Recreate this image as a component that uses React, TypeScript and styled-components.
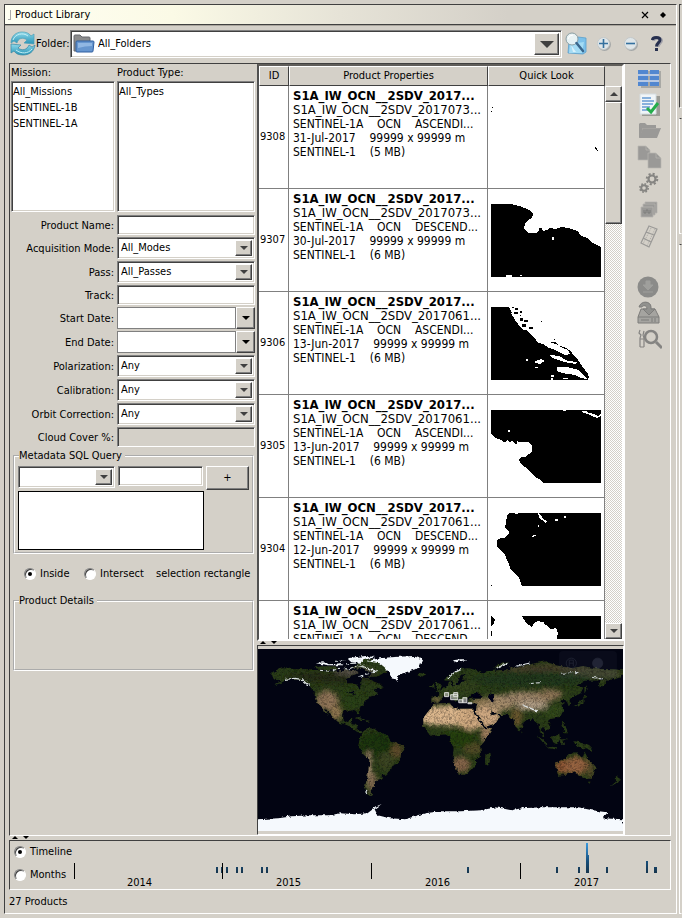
import React from "react";
import styled, { createGlobalStyle, css } from "styled-components";

const face = "#d4d0c8";
const dark = "#404040";
const mid = "#808080";

const Global = createGlobalStyle`
  * { box-sizing: border-box; }
  body { margin: 0; background: ${face}; }
  body, button, input, select, textarea {
    font-family: "DejaVu Sans Condensed", "Noto Sans", sans-serif;
    font-size: 11px;
    line-height: 14px;
    color: #000;
  }
`;

const sunken = css`
  border: 1px solid;
  border-color: ${mid} #fff #fff ${mid};
  box-shadow: inset 1px 1px 0 ${dark}, inset -1px -1px 0 ${face};
`;
const raised = css`
  border: 1px solid;
  border-color: #fff ${dark} ${dark} #fff;
  box-shadow: inset -1px -1px 0 ${mid};
  background: ${face};
`;
const etched = css`
  border: 1px solid;
  border-color: ${dark} #fff #fff ${dark};
`;

/* ---------- frame ---------- */
const Screen = styled.div`
  display: grid;
  grid-template-columns: minmax(0, 1fr) 3px;
  column-gap: 2px;
  height: 100vh;
  min-height: 760px;
  padding: 4px 0 4px 4px;
`;
const Frame = styled.main`
  display: flex;
  flex-direction: column;
  min-height: 0;
  border: 1px solid;
  border-color: ${dark} #fff #fff ${dark};
`;
const Neighbours = styled.aside`
  display: grid;
  grid-template-rows: 104px 116px 1fr;
  row-gap: 10px;
`;
const Neighbour = styled.div<{ $flat?: boolean }>`
  border: 1px solid;
  border-color: ${dark} transparent #fff ${(p) => (p.$flat ? "#fff" : dark)};
`;
const TitleBar = styled.header`
  display: flex;
  align-items: center;
  gap: 4px;
  height: 20px;
  padding: 0 6px 0 3px;
  border-bottom: 1px solid ${dark};
  background: linear-gradient(90deg, #fffff2, #fbfae6 25%, #e6e3d7 50%, ${face} 75%);
  box-shadow: 0 1px 0 #aaa69e;
`;
const Grip = styled.span`
  width: 3px;
  height: 10px;
  border: 1px solid #aaa;
  border-width: 0 1px 1px 0;
`;
const Title = styled.h1`
  flex: 1;
  margin: 0;
  font-size: 11px;
  font-weight: normal;
`;
const BareButton = styled.button`
  display: flex;
  align-items: center;
  justify-content: center;
  padding: 0;
  border: 0;
  background: none;
  svg { display: block; }
`;
const TitleButton = styled(BareButton)`
  width: 14px;
  height: 14px;
`;

/* ---------- toolbar ---------- */
const Toolbar = styled.div`
  display: flex;
  align-items: center;
  height: 38px;
  padding: 0 6px 0 5px;
`;
const FolderLabel = styled.label`
  width: 34px;
  white-space: nowrap;
`;
const ToolButton = styled(BareButton)<{ $w: number }>`
  width: ${(p) => p.$w}px;
  height: 28px;
`;

/* ---------- fields ---------- */
const ComboBox = styled.span<{ $h: number; $arrow: number }>`
  display: grid;
  grid-template-columns: minmax(0, 1fr) ${(p) => p.$arrow}px;
  height: ${(p) => p.$h}px;
  padding: 2px;
  background: #fff;
  ${sunken}
`;
const FolderCombo = styled(ComboBox)`
  flex: 1;
  grid-template-columns: 24px minmax(0, 1fr) ${(p) => p.$arrow}px;
  align-items: center;
`;
const Select = styled.select<{ $from?: number }>`
  grid-row: 1;
  grid-column: ${(p) => p.$from ?? 1} / -1;
  appearance: none;
  width: 100%;
  height: 100%;
  padding: 0 20px 0 1px;
  border: 0;
  outline: 0;
  background: transparent;
`;
const Arrow = styled.span`
  grid-row: 1;
  grid-column: -2 / -1;
  align-self: stretch;
  display: flex;
  align-items: center;
  justify-content: center;
  pointer-events: none;
  ${raised}
`;
const Input = styled.input`
  width: 100%;
  height: 20px;
  padding: 0 3px;
  background: #fff;
  outline: 0;
  ${sunken}
  &:disabled { background: ${face}; }
`;
const DateBox = styled.span`
  display: grid;
  grid-template-columns: minmax(0, 1fr) 19px;
  height: 22px;
`;
const DateInput = styled.input`
  width: 100%;
  height: 100%;
  border: 1px solid ${mid};
  padding: 0 3px;
`;
const DateButton = styled.button`
  display: flex;
  align-items: center;
  justify-content: center;
  padding: 0;
  ${raised}
`;

/* ---------- work area ---------- */
const Body = styled.div`
  flex: 1;
  min-height: 0;
  display: flex;
  flex-direction: column;
  padding: 0 5px 0 4px;
`;
const Work = styled.div`
  flex: 1;
  min-height: 0;
  display: grid;
  grid-template-columns: 247px minmax(0, 1fr) 46px;
  ${etched}
`;
const FormPane = styled.form`
  padding: 0 2px 0 1px;
  min-height: 0;
  overflow: hidden;
`;
const FormGrid = styled.div`
  display: grid;
  grid-template-columns: 104px minmax(0, 1fr);
  column-gap: 2px;
  row-gap: 2px;
  align-items: center;
`;
const ListGrid = styled(FormGrid)`
  row-gap: 0;
  margin-bottom: 3px;
`;
const ListLabel = styled.label`
  height: 17px;
  padding-top: 2px;
`;
const List = styled.ul`
  height: 131px;
  margin: 0;
  padding: 2px 1px;
  list-style: none;
  background: #fff;
  line-height: 16px;
  ${sunken}
`;
const FieldLabel = styled.label`
  text-align: right;
  white-space: nowrap;
  padding: 2px 1px 0 0;
`;
const Group = styled.fieldset<{ $h: number }>`
  height: ${(p) => p.$h}px;
  margin: 2px 1px 0 2px;
  padding: 3px 3px 0;
  border: 2px groove #fff;
`;
const Legend = styled.legend`
  margin-left: 1px;
  padding: 0 3px 0 0;
`;
const QueryRow = styled.div`
  display: grid;
  grid-template-columns: 97px minmax(0, 1fr) 43px;
  column-gap: 3px;
  height: 25px;
  align-items: start;
`;
const AddButton = styled.button`
  height: 24px;
  padding: 0;
  ${raised}
`;
const QueryText = styled.textarea`
  display: block;
  width: calc(100% - 45px);
  height: 59px;
  border: 1px solid #000;
  background: #fff;
  resize: none;
`;
const RadioRow = styled.div`
  display: flex;
  align-items: center;
  height: 38px;
  padding: 2px 0 0 13px;
  white-space: nowrap;
`;
const RadioLabel = styled.label<{ $w?: number }>`
  display: flex;
  align-items: center;
  gap: 4px;
  width: ${(p) => (p.$w ? p.$w + "px" : "auto")};
`;
const Radio = styled.input`
  appearance: none;
  display: grid;
  place-items: center;
  width: 12px;
  height: 12px;
  margin: 0;
  border: 1px solid;
  border-color: ${mid} #fff #fff ${mid};
  border-radius: 50%;
  background: #fff;
  box-shadow: inset 1px 1px 0 ${dark};
  &:checked::after {
    content: "";
    width: 4px;
    height: 4px;
    border-radius: 50%;
    background: #000;
  }
`;

/* ---------- results ---------- */
const Centre = styled.section`
  display: flex;
  flex-direction: column;
  min-height: 0;
`;
const Results = styled.div`
  flex: 1;
  min-height: 0;
  display: grid;
  grid-template-columns: minmax(0, 1fr) 17px;
  background: #fff;
  border: 2px solid;
  border-color: #605e5a #fff #fff #505050;
`;
const TableClip = styled.div`
  min-height: 0;
  overflow: hidden;
`;
const Table = styled.table`
  width: 100%;
  table-layout: fixed;
  border-collapse: separate;
  border-spacing: 0;
`;
const Th = styled.th<{ $w?: number }>`
  width: ${(p) => (p.$w ? p.$w + "px" : "auto")};
  height: 20px;
  padding: 0;
  font-weight: normal;
  background: ${face};
  border: 1px solid;
  border-color: #fff ${dark} ${dark} #fff;
`;
const Td = styled.td`
  height: 103px;
  padding: 0;
  border: 1px solid ${mid};
  border-width: 0 1px 1px 0;
  vertical-align: middle;
`;
const IdCell = styled(Td)`
  padding-left: 1px;
`;
const PropCell = styled(Td)`
  padding: 3px 0 0 4px;
  vertical-align: top;
  overflow: hidden;
`;
const LookCell = styled(Td)`
  padding: 0 3px;
  svg { display: block; width: 100%; max-width: 110px; height: 73px; }
`;
const Line = styled.div<{ $kind?: "title" | "name" }>`
  white-space: pre;
  font-size: ${(p) => (p.$kind ? 13 : 12)}px;
  font-weight: ${(p) => (p.$kind === "title" ? "bold" : "normal")};
  line-height: 14px;
`;
const ScrollBar = styled.div`
  display: flex;
  flex-direction: column;
  background: repeating-conic-gradient(${face} 0 25%, #fff 0 50%) 0 0 / 2px 2px;
`;
const ScrollTop = styled.div`
  height: 20px;
  background: ${face};
`;
const ScrollButton = styled.button`
  display: flex;
  align-items: center;
  justify-content: center;
  height: 16px;
  padding: 0;
  ${raised}
`;
const Thumb = styled.div`
  height: 122px;
  ${raised}
`;
const Track = styled.div`
  flex: 1;
`;
const Splitter = styled.div`
  display: flex;
  gap: 5px;
  height: 4px;
  padding-left: 3px;
  svg { display: block; }
`;
const MapFrame = styled.div`
  padding: 3px 0;
  border: 1px solid;
  border-color: ${dark} #fff #fff ${dark};
  svg { display: block; width: 100%; height: auto; }
`;
const SideBar = styled.nav`
  display: flex;
  flex-direction: column;
  align-items: center;
  padding: 2px 0 0 2px;
  border-left: 1px solid #fff;
`;
const SideButton = styled(BareButton)<{ $gap?: number }>`
  width: 26px;
  height: 26px;
  margin-top: ${(p) => p.$gap ?? 0}px;
`;

/* ---------- timeline ---------- */
const Timeline = styled.section`
  display: grid;
  grid-template-columns: 64px minmax(0, 1fr);
  height: 50px;
  ${etched}
`;
const Modes = styled.div`
  display: grid;
  grid-template-rows: 22px 24px;
  padding-left: 4px;
`;
const Chart = styled.div`
  display: flex;
  flex-direction: column;
  svg { display: block; width: 100%; height: 38px; }
`;
const Years = styled.div`
  display: grid;
  grid-template-columns: repeat(4, 1fr);
  height: 10px;
  line-height: 8px;
  span { text-align: center; padding-right: 18px; }
`;
const Status = styled.footer`
  height: 23px;
  padding-top: 5px;
`;

/* ---------- small drawings ---------- */
const Tri = ({ w = 8, up = false, color = "#404040" }: { w?: number; up?: boolean; color?: string }) => (
  <svg width={w} height={w / 2} viewBox="0 0 8 4" aria-hidden>
    <path d={up ? "M0 4L4 0L8 4Z" : "M0 0H8L4 4Z"} fill={color} />
  </svg>
);

const RefreshIcon = () => (
  <svg width="26" height="26" viewBox="0 0 26 26">
    <defs>
      <linearGradient id="rf" x1="0" y1="0" x2="0" y2="1">
        <stop offset="0" stopColor="#8fdaea" />
        <stop offset="1" stopColor="#2793b6" />
      </linearGradient>
    </defs>
    <path d="M1 12C1 5 6 1 12 1C16 1 19 2 21 5L24 3V13L14 12L17 9C13 6 8 7 7 12L4 10Z" fill="url(#rf)" stroke="#4a9fb8" strokeWidth=".7" />
    <path d="M25 14C24 21 19 24 13 24C9 24 6 23 4 20L1 22V13L11 14L8 17C12 20 17 19 19 14L22 16Z" fill="url(#rf)" stroke="#3887a4" strokeWidth=".7" />
    <path d="M3 9C5 3 13 1 18 5M22 18C18 23 11 23 6 19" fill="none" stroke="#c3eef5" />
  </svg>
);
const FolderIcon = () => (
  <svg width="22" height="20" viewBox="0 0 22 20">
    <path d="M1 17V2Q1 1 2 1H7L9 3H16Q17 3 17 4V8H5V17Z" fill="#8a8b8c" stroke="#66696e" />
    <path d="M4 7H20Q21 7 21 8L20 17Q20 18 19 18H4Q3 18 3 17V8Q3 7 4 7Z" fill="#6796cf" stroke="#315f9f" />
    <path d="M5 9H19V12Q12 12 5 14Z" fill="#91b7e3" />
  </svg>
);
const FindIcon = () => (
  <svg width="24" height="24" viewBox="0 0 24 24">
    <path d="M5 9L12 8L14 5L22 6V20L19 22L4 21Z" fill="#7cc1ea" stroke="#5aa0cc" strokeWidth=".8" />
    <path d="M6 12L20 10L18 21H5Z" fill="#a4dcf5" />
    <path d="M7 13L9 20H12Z" fill="#fff" opacity=".6" />
    <circle cx="8" cy="7" r="6" fill="#e9f3f5" fillOpacity=".95" stroke="#8a9ea3" />
    <path d="M12.500 11L19 19" stroke="#3a668c" strokeWidth="2.500" strokeLinecap="round" />
    <path d="M4 7Q5 3 9 3" fill="none" stroke="#fff" />
  </svg>
);
const RoundIcon = ({ plus }: { plus?: boolean }) => (
  <svg width="16" height="16" viewBox="0 0 16 16">
    <circle cx="8.500" cy="8.500" r="6.500" fill="#a5a8a8" />
    <circle cx="7.500" cy="7.500" r="6" fill="#dfe6e9" stroke="#c4c9ca" />
    <path d={plus ? "M3 7.500H12M7.500 3V12" : "M3 7.500H12"} stroke="#35719f" strokeWidth="1.600" />
  </svg>
);
const HelpIcon = () => (
  <svg width="16" height="18" viewBox="0 0 16 18">
    <g fill="none" strokeWidth="3">
      <path d="M4.500 6C4.500 2 12.500 2 12.500 5.500C12.500 8 9 8.500 9 12" stroke="#a2a2aa" />
      <path d="M3.500 5C3.500 1.500 11 1.500 11 5C11 7.500 7.500 8 7.500 11.500" stroke="#27304f" />
    </g>
    <rect x="6" y="13" width="3" height="3" fill="#27304f" />
  </svg>
);

const gray = "#9a9997";
const SideIcon = ({ kind }: { kind: string }) => (
  <svg width="26" height="26" viewBox="0 0 26 26">
    {kind === "table" && (
      <g>
        <path d="M5 5H25V22H5Z" fill="#a9a9a5" />
        <path d="M2 4H12V8H2ZM14 4H23V8H14ZM2 10H12V14H2ZM14 10H23V14H14ZM2 16H12V20H2ZM14 16H23V20H14Z" fill="#5187d0" />
        <path d="M2 9H23M2 15H23" stroke="#b7c9e4" strokeWidth="2" />
      </g>
    )}
    {kind === "check" && (
      <g>
        <path d="M6 4H24V24H6Z" fill="#9b9b95" />
        <path d="M4 2H20V22H4Z" fill="#f0f5f8" stroke="#d5dde0" />
        <path d="M6 6H15M6 9H18M6 12H17M6 15H14M6 18H12" stroke="#659bd2" strokeWidth="1.500" />
        <path d="M11 16L15 20L22 11" fill="none" stroke="#25ad4b" strokeWidth="3" />
      </g>
    )}
    {kind === "folder" && (
      <g fill={gray}>
        <path d="M3 6L4 5H9L11 7H20V10H7L4 20L3 19Z" />
        <path d="M7 10H25L21 20H3Z" />
        <path d="M6 10.500H24" stroke="#acaaa6" strokeWidth=".6" />
      </g>
    )}
    {kind === "copy" && (
      <g fill={gray} stroke="#b9b7b2" strokeWidth=".7">
        <path d="M2 2H10L14 6V16H2Z" />
        <path d="M10 2V6H14" fill="none" />
        <path d="M12 9H20L25 14V24H12Z" />
        <path d="M20 9V14H25" fill="none" />
      </g>
    )}
    {kind === "gears" && (
      <g fill="none" stroke="#868582">
        <circle cx="16" cy="9" r="3.500" strokeWidth="2.200" />
        <circle cx="16" cy="9" r="5.300" strokeWidth="2" strokeDasharray="2.100 2.060" />
        <circle cx="8" cy="18" r="2.800" strokeWidth="2" />
        <circle cx="8" cy="18" r="4.200" strokeWidth="1.600" strokeDasharray="1.650 1.650" />
      </g>
    )}
    {kind === "stack" && (
      <g fill={gray} stroke="#b6b4b0" strokeWidth=".8">
        <path d="M9 5H21V16H9Z" />
        <path d="M7 7H19V18H7Z" />
        <path d="M5 10H17V20H5Z" />
        <path d="M8 13V16H10V13H12V16H14V13" fill="none" stroke="#777" />
      </g>
    )}
    {kind === "film" && (
      <g fill="none" stroke={gray} strokeWidth="1.200">
        <path d="M13 2L21 5L13 23L5 19ZM10 8L18 11M7 14L15 18" />
        <path d="M15 4L7 20M19 5L11 22" strokeDasharray="1 1" strokeWidth=".7" />
      </g>
    )}
    {kind === "download" && (
      <g>
        <circle cx="12" cy="13" r="10.500" fill="#8b8b89" />
        <path d="M10 7H14V11H17L12 16L7 11H10ZM7 18H17" fill="#9f9f9c" stroke="#9f9f9c" />
      </g>
    )}
    {kind === "drive" && (
      <g stroke="#7d7c7a" fill="#a5a4a0">
        <path d="M5 9H19L23 17V23H2V17Z" />
        <path d="M2 17H23M5 20H13M16 18V22M19 18V22" />
        <path d="M3 7C5 0 15 1 15 7V9H19L13 15L7 9H11C11 5 7 5 6 7Z" fill="#91918e" />
      </g>
    )}
    {kind === "search" && (
      <g fill="none" stroke="#858482">
        <path d="M4 4L3 7L5 9L4 12V21M8 5L7 9L8 12V21M4 13H8M4 21H8" strokeWidth="1.200" />
        <circle cx="15" cy="11" r="6" strokeWidth="2.500" />
        <path d="M20 16L26 22" strokeWidth="3" />
      </g>
    )}
  </svg>
);

/* ---------- quick looks: dark water mask with light islands ---------- */
type Look = { sea: string; land?: string; specks?: number[][]; dots?: number[][] };
const looks: Record<string, Look> = {
  "9308": { sea: "M1 6h1v1h-1zM0 10h1v1h-1zM104 46h1v1h1v2h1v1h-1v-1h-1v-1h-1z" },
  "9307": {
    sea: "M0 0H20L23 1L29 2L36 5L40 7L42 10L41 14L37 16L34 19L33 25L37 29L45 29L48 27L48 24H51L52 27L56 26L59 24L65 25L70 23L77 24L84 26L88 28L89 31L96 34L102 39L110 43V73H0Z",
    specks: [[61, 33, 2, 3], [15, 71, 6, 2], [29, 71, 2, 1]],
  },
  "9306": {
    sea: "M0 0H18L22 8L24 10L27 17L32 23L36 23L40 28L44 31L46 35L54 38L61 35H65L67 38L75 41L80 44L83 49L87 53L91 59L97 67L98 70L97 73H0Z",
    land: "M20 6L24 9L28 15L32 18L39 22L37 24L29 19L24 13ZM52 37L62 36L67 38L72 41L77 43L79 47L74 48L64 43L58 41ZM59 48L68 49L77 54L86 55L85 57L73 55L61 51ZM43 55L50 52L54 54L49 57L44 56ZM66 60L76 60L88 63L96 72L90 71L84 68L71 66L66 64Z",
    specks: [[35, 52, 2, 2], [44, 60, 3, 1], [60, 68, 3, 2], [60, 71, 2, 2], [72, 71, 5, 1]],
    dots: [[21, 0, 2, 1], [24, 1, 3, 2], [23, 5, 4, 2], [29, 4, 2, 2], [29, 11, 3, 3], [33, 13, 4, 2], [31, 17, 4, 3], [38, 20, 4, 2], [63, 32, 1, 1], [50, 14, 1, 1], [29, 8, 1, 1]],
  },
  "9305": {
    sea: "M0 0H110V73H53L48 69L43 66L39 62L34 57L29 53L28 49L30 47H34L38 44L41 41V36L38 32H28L26 31V34H24L22 31L18 32L16 30L14 32H12L10 30L5 28L0 24Z",
    land: "M90 1H95L98 3L103 4L107 6L109 4V3L106 3H108L110 5V6L106 8L99 5L93 3Z",
    specks: [[72, 0, 3, 1], [17, 20, 2, 2]],
  },
  "9304": {
    sea: "M18 0H110V73H31L30 70L28 65L24 61L20 57L17 49L14 42L10 37L6 34V27L10 25H13L18 21V18L14 15L15 9L16 3Z",
    land: "M47 0L51 4L53 7L57 8L54 10L51 7L49 6Z",
    specks: [[24, 0, 3, 1], [64, 6, 3, 2], [73, 3, 2, 2], [47, 12, 1, 2], [42, 22, 3, 1], [41, 23, 2, 1]],
    dots: [[0, 72, 1, 1]],
  },
  "9303": {
    sea: "M31 0H110V73H60L66 22L67 17L65 12L60 13L55 9L48 5L44 6L41 11L35 7ZM0 0L4 4L2 9L0 10Z",
    specks: [[50, 6, 3, 2]],
    dots: [[0, 15, 1, 5]],
  },
};
const QuickLook = ({ id }: { id: string }) => {
  const look = looks[id];
  const rects = (list: number[][] | undefined, fill: string) =>
    list?.map(([x, y, w, h], i) => <rect key={fill + i} x={x} y={y} width={w} height={h} fill={fill} />);
  return (
    <svg viewBox="0 0 110 73" shapeRendering="crispEdges" role="img" aria-label={"Quick look " + id}>
      <path d={look.sea} />
      {look.land && <path d={look.land} fill="#fff" />}
      {rects(look.specks, "#fff")}
      {rects(look.dots, "#000")}
    </svg>
  );
};

/* ---------- world map, coordinates in longitude and latitude ---------- */
const landmass = [
  "-168,66 -162,69 -156,71 -141,70 -128,70 -115,68 -105,68 -95,68 -94,72 -88,68 -82,69 -81,66 -87,64 -94,60 -92,57 -83,55 -80,51 -78,53 -78,58 -77,62 -70,61 -66,58 -61,56 -56,52 -66,50 -65,48 -60,46 -66,44 -70,43 -71,41 -75,39 -76,35 -81,31 -80,26 -82,27 -84,30 -90,29 -95,29 -97,26 -97,21 -94,18 -91,19 -90,21 -87,21 -88,16 -83,15 -83,10 -79,9 -77,8 -80,7 -85,10 -88,13 -95,16 -102,18 -105,21 -109,26 -113,31 -114,31 -110,24 -115,29 -118,34 -122,37 -124,42 -124,48 -130,54 -136,59 -145,60 -152,60 -158,56 -165,54 -158,58 -165,61 -166,64",
  "-77,8 -72,12 -64,11 -60,8 -52,5 -50,0 -44,-3 -37,-5 -35,-8 -39,-14 -40,-21 -48,-26 -49,-30 -54,-34 -58,-34 -58,-38 -62,-39 -65,-42 -66,-46 -69,-51 -67,-55 -73,-53 -75,-47 -73,-40 -71,-30 -70,-19 -76,-14 -81,-6 -80,0 -78,4",
  "-6,36 -10,31 -17,22 -17,14 -12,7 -8,4 4,6 9,4 9,-1 13,-7 12,-17 15,-27 18,-34 24,-34 31,-29 35,-24 35,-19 40,-15 39,-6 44,1 51,11 43,12 38,19 33,28 32,31 20,31 19,30 11,34 10,37",
  "-9,37 -9,43 -2,44 -1,46 -5,48 2,51 8,54 8,57 11,57 11,54 20,55 24,59 30,60 22,60 22,63 25,65 22,66 17,61 18,59 14,55 11,59 5,59 5,62 14,67 20,70 28,71 40,68 40,66 33,66 44,66 45,68 60,69 68,69 68,73 73,71 80,73 88,75 104,78 113,74 130,71 140,73 160,70 170,70 180,69 180,65 177,62 170,60 163,60 163,56 157,51 156,57 163,62 155,59 143,59 135,54 141,52 138,46 131,43 127,39 129,36 126,35 125,39 121,40 118,38 122,37 119,35 121,31 119,25 114,22 108,21 106,19 109,13 105,9 101,13 99,11 103,2 101,3 98,9 98,16 94,17 91,22 87,21 81,16 80,12 77,8 73,17 72,21 67,25 57,25 56,27 51,28 48,30 52,25 56,26 59,22 52,16 44,13 39,21 35,28 36,36 28,37 26,40 31,41 41,41 37,45 32,46 28,43 26,41 23,40 22,37 19,41 13,45 18,40 16,38 12,42 9,44 3,43 0,40 -2,37",
  "114,-22 122,-18 130,-12 136,-12 136,-15 140,-17 142,-11 146,-19 153,-26 151,-34 147,-38 140,-37 136,-34 131,-31 124,-34 116,-35 115,-31",
  "131,-1 138,-2 147,-6 151,-11 143,-8 138,-8 133,-4",
  "109,2 117,7 118,1 115,-4 110,-2", "95,5 104,-2 106,-6 101,-2", "106,-6 114,-7 115,-9 107,-8", "119,1 125,1 121,0 123,-5 119,-4",
  "120,18 122,18 124,12 126,7 122,7 121,13", "130,33 136,36 140,40 142,45 145,43 141,41 141,36 135,34", "142,46 144,50 143,54 142,53",
  "-5,50 -3,54 -6,58 -2,57 1,53 1,51", "-10,52 -10,54 -6,55 -6,52", "-24,65 -18,66 -14,65 -18,63", "44,-16 49,-12 50,-16 47,-25 44,-24",
  "173,-35 178,-38 174,-42 167,-46 173,-41", "145,-41 148,-41 147,-43", "-85,22 -80,23 -74,20 -78,20", "-74,20 -69,19 -73,18", "80,9 82,7 80,6",
  "-73,82 -60,76 -50,70 -62,63 -72,63 -66,66 -77,70 -88,72 -84,74", "-125,72 -116,73 -103,73 -102,69 -115,69", "52,71 57,75 68,77 57,71",
];
const snowfields = [
  "-73,78 -60,76 -54,71 -51,67 -48,61 -43,60 -40,65 -25,70 -20,74 -18,80 -27,83 -45,82 -60,81",
  "-92,81 -75,83 -64,82 -76,79 -80,76 -88,77", "-123,76 -116,77 -109,75 -98,76 -96,74 -110,74", "-82,73 -72,71 -65,67 -67,70 -76,73", "12,79 20,80 27,80 20,78 16,77",
  "-180,-78 -160,-77 -146,-75 -130,-74 -110,-74 -98,-72 -85,-73 -72,-72 -63,-65 -58,-63 -65,-68 -62,-74 -50,-77 -35,-78 -15,-72 0,-70 20,-70 40,-69 55,-66 70,-69 80,-67 100,-66 120,-66 135,-66 150,-69 165,-71 160,-77 180,-78 180,-90 -180,-90",
];
const waters = [
  "48,46 53,46 52,40 54,37 49,38 47,43", "28,42 31,46 38,47 41,42 34,42", "-93,47 -85,48 -83,45 -87,45 -88,42 -86,46",
];
// longitude, latitude, radius x, radius y, colour
const terrain: [number, number, number, number, string][] = [
  [-105, 62, 50, 6, "#252f18"], [-112, 39, 11, 10, "#8e7357"], [-103, 27, 6, 8, "#8f7650"], [-86, 40, 12, 9, "#2a4116"], [-85, 68, 20, 4, "#575147"],
  [8, 24, 35, 10, "#dcb78d"], [30, 22, 14, 12, "#d3ac82"], [47, 24, 12, 13, "#cfa982"], [20, -24, 9, 8, "#846549"], [45, 6, 5, 8, "#a28061"], [32, -8, 10, 6, "#514b27"], [18, 2, 17, 8, "#26400f"],
  [58, 37, 15, 8, "#a58c6b"], [85, 41, 26, 7, "#9b8467"], [90, 34, 15, 5, "#ae9b83"], [75, 23, 6, 9, "#67562f"], [108, 45, 12, 5, "#8e7656"], [112, 28, 10, 6, "#334a1a"],
  [110, 71, 55, 4, "#443f2a"], [155, 66, 24, 6, "#45482e"], [90, 60, 60, 7, "#22381a"], [20, 52, 18, 8, "#30431d"], [40, 38, 9, 4, "#927b57"], [-4, 40, 5, 3, "#7b6b45"],
  [122, -26, 9, 7, "#8d5636"], [134, -25, 11, 9, "#96633f"], [148, -28, 4, 10, "#554c2b"],
  [-62, -4, 18, 12, "#1e350f"], [-43, -10, 6, 8, "#5d4b2b"], [-71, -28, 3, 18, "#a98c72"], [-67, -42, 5, 10, "#7d674e"], [-54, -20, 8, 9, "#3b4520"],
];
const pts = (s: string) =>
  s.split(" ").map((p) => { const [x, y] = p.split(","); return `${x},${-Number(y)}`; }).join(" ");

const WorldMap = () => (
  <svg viewBox="-180 -90 360 180" role="img" aria-label="World map">
    <defs>
      <clipPath id="land">{landmass.map((s, i) => <polygon key={i} points={pts(s)} />)}</clipPath>
      <filter id="soft" x="-30%" y="-30%" width="160%" height="160%"><feGaussianBlur stdDeviation="2" /></filter>
      <filter id="rough" x="0" y="0" width="100%" height="100%">
        <feTurbulence type="fractalNoise" baseFrequency=".25" numOctaves="3" seed="8" result="n" />
        <feDisplacementMap in="SourceGraphic" in2="n" scale="4" xChannelSelector="R" yChannelSelector="G" />
      </filter>
      <filter id="grain" x="0" y="0" width="100%" height="100%">
        <feTurbulence type="fractalNoise" baseFrequency=".5" numOctaves="3" seed="4" />
        <feColorMatrix values="0 0 0 0 0  0 0 0 0 0  0 0 0 0 0  2.5 0 0 0 -1" />
      </filter>
    </defs>
    <rect x="-180" y="-90" width="360" height="180" fill="#020412" />
    <rect x="-180" y="82" width="360" height="8" fill="#f5f9fd" />
    <g filter="url(#rough)">
      <g clipPath="url(#land)">
        <rect x="-180" y="-90" width="360" height="180" fill="#2b3d18" />
        <g filter="url(#soft)">
          {terrain.map(([x, y, rx, ry, fill], i) => <ellipse key={i} cx={x} cy={-y} rx={rx} ry={ry} fill={fill} />)}
        </g>
        <rect x="-180" y="-90" width="360" height="180" filter="url(#grain)" opacity=".35" />
      </g>
      {waters.map((s, i) => <polygon key={i} points={pts(s)} fill="#020412" />)}
      <g fill="#f5f9fd">
        {snowfields.map((s, i) => <polygon key={i} points={pts(s)} />)}
      </g>
      <g fill="none" stroke="#dce2e4">
        <path d="M-153 -60L-144 -61L-137 -60L-130 -54M-74 49L-73 53M80 -35L95 -29M7 -61L14 -67L21 -70M75 -73L88 -76M55 -71L66 -76M-62 -69L-68 -66" strokeWidth="1.200" />
        <path d="M-119 -69L-108 -68L-100 -71L-90 -70L-83 -73M-105 -78L-94 -78M-100 -75L-82 -76L-75 -74M-88 -79L-78 -80M-80 -63L-70 -66M120 -66L138 -67M88 -56L100 -57M150 -62L162 -60" strokeDasharray="4 2" />
      </g>
    </g>
    <g fill="#c9cbc6" fillOpacity=".6" stroke="#f0f0ee" strokeWidth=".8">
      <path d="M4 -47h4v4h-4zM10 -45h7v5h-7zM13 -47h4v4h-4zM22 -42h4v5h-4zM18 -40h4v3h-4zM27 -37h4v1h-4z" />
    </g>
    <g opacity=".3" stroke="#6b7085" fill="none" strokeWidth=".8">
      <rect x="117" y="-88" width="57" height="27" rx="4" fill="#454c62" fillOpacity=".35" stroke="none" />
      <circle cx="129" cy="-76" r="5" /><path d="M127 -73V-79H131V-73M127 -76H131" />
      <circle cx="155" cy="-76" r="5" fill="#6b7085" />
    </g>
  </svg>
);

/* ---------- data ---------- */
const products = [
  { id: "9308", stamp: "2017073", pass: "ASCENDI...", date: "31-Jul-2017", size: "5 MB" },
  { id: "9307", stamp: "2017073", pass: "DESCEND...", date: "30-Jul-2017", size: "6 MB" },
  { id: "9306", stamp: "2017061", pass: "ASCENDI...", date: "13-Jun-2017", size: "6 MB" },
  { id: "9305", stamp: "2017061", pass: "ASCENDI...", date: "13-Jun-2017", size: "6 MB" },
  { id: "9304", stamp: "2017061", pass: "DESCEND...", date: "12-Jun-2017", size: "6 MB" },
  { id: "9303", stamp: "2017061", pass: "DESCEND...", date: "12-Jun-2017", size: "6 MB" },
];
type Field = { id: string; label: string; type: "text" | "combo" | "date" | "off"; value?: string };
const fields: Field[] = [
  { id: "name", label: "Product Name:", type: "text" },
  { id: "mode", label: "Acquisition Mode:", type: "combo", value: "All_Modes" },
  { id: "pass", label: "Pass:", type: "combo", value: "All_Passes" },
  { id: "track", label: "Track:", type: "text" },
  { id: "start", label: "Start Date:", type: "date" },
  { id: "end", label: "End Date:", type: "date" },
  { id: "pol", label: "Polarization:", type: "combo", value: "Any" },
  { id: "cal", label: "Calibration:", type: "combo", value: "Any" },
  { id: "orbit", label: "Orbit Correction:", type: "combo", value: "Any" },
  { id: "cloud", label: "Cloud Cover %:", type: "off" },
];
const sideTools: [string, number][] = [
  ["table", 0], ["check", 0], ["folder", 0], ["copy", 0], ["gears", 0], ["stack", 1], ["film", 1], ["download", 24], ["drive", 0], ["search", 0],
];
// x, height, width of every acquisition bar
const bars = [
  [142, 6, 2], [147, 6, 1], [152, 6, 2], [162, 6, 2], [167, 6, 2], [187, 6, 2], [192, 6, 2], [393, 6, 2],
  [482, 6, 2], [504, 6, 2], [512, 30, 2], [514, 18, 1], [532, 6, 2], [572, 12, 2], [580, 6, 3],
];

const Combo = ({ id, value = "", h = 22, label }: { id: string; value?: string; h?: number; label?: string }) => (
  <ComboBox $h={h} $arrow={17}>
    <Select id={id} aria-label={label} defaultValue={value}><option value={value}>{value}</option></Select>
    <Arrow><Tri w={8} /></Arrow>
  </ComboBox>
);

const FieldRow = ({ f }: { f: Field }) => (
  <>
    <FieldLabel htmlFor={f.id}>{f.label}</FieldLabel>
    {f.type === "combo" && <Combo id={f.id} value={f.value} />}
    {f.type === "date" && (
      <DateBox>
        <DateInput id={f.id} />
        <DateButton type="button" aria-label={"Choose " + f.label}><Tri w={8} color="#000" /></DateButton>
      </DateBox>
    )}
    {(f.type === "text" || f.type === "off") && <Input id={f.id} disabled={f.type === "off"} />}
  </>
);

export default function App() {
  return (
    <Screen>
      <Global />
      <Frame>
        <TitleBar>
          <Grip />
          <Title>Product Library</Title>
          <TitleButton aria-label="Close">
            <svg width="8" height="8" viewBox="0 0 8 8"><path d="M1 1L7 7M7 1L1 7" stroke="#000" strokeWidth="1.200" /></svg>
          </TitleButton>
          <TitleButton aria-label="Pin">
            <svg width="8" height="8" viewBox="0 0 8 8"><path d="M4 1L7 4L4 7L1 4Z" /></svg>
          </TitleButton>
        </TitleBar>
        <Toolbar>
          <ToolButton $w={26} aria-label="Refresh"><RefreshIcon /></ToolButton>
          <FolderLabel htmlFor="folder">Folder:</FolderLabel>
          <FolderCombo $h={28} $arrow={25}>
            <FolderIcon />
            <Select id="folder" $from={2} defaultValue="All_Folders"><option>All_Folders</option></Select>
            <Arrow><Tri w={14} /></Arrow>
          </FolderCombo>
          <ToolButton $w={28} aria-label="Find products"><FindIcon /></ToolButton>
          <ToolButton $w={27} aria-label="Add folder"><RoundIcon plus /></ToolButton>
          <ToolButton $w={27} aria-label="Remove folder"><RoundIcon /></ToolButton>
          <ToolButton $w={26} aria-label="Help"><HelpIcon /></ToolButton>
        </Toolbar>
        <Body>
          <Work>
            <FormPane onSubmit={(e) => e.preventDefault()}>
              <ListGrid>
                <ListLabel as="span">Mission:</ListLabel>
                <ListLabel as="span">Product Type:</ListLabel>
                <List aria-label="Mission"><li>All_Missions</li><li>SENTINEL-1B</li><li>SENTINEL-1A</li></List>
                <List aria-label="Product Type"><li>All_Types</li></List>
              </ListGrid>
              <FormGrid>{fields.map((f) => <FieldRow key={f.id} f={f} />)}</FormGrid>
              <Group $h={105}>
                <Legend>Metadata SQL Query</Legend>
                <QueryRow>
                  <Combo id="meta" label="Metadata field" />
                  <Input aria-label="Metadata value" />
                  <AddButton type="button">+</AddButton>
                </QueryRow>
                <QueryText aria-label="SQL query" />
              </Group>
              <RadioRow>
                <RadioLabel $w={60}><Radio type="radio" name="area" defaultChecked />Inside</RadioLabel>
                <RadioLabel $w={72}><Radio type="radio" name="area" />Intersect</RadioLabel>
                <span>selection rectangle</span>
              </RadioRow>
              <Group $h={77}><Legend>Product Details</Legend></Group>
            </FormPane>
            <Centre>
              <Results>
                <TableClip>
                  <Table>
                    <thead>
                      <tr><Th $w={30}>ID</Th><Th>Product Properties</Th><Th $w={117}>Quick Look</Th></tr>
                    </thead>
                    <tbody>
                      {products.map((p) => (
                        <tr key={p.id}>
                          <IdCell>{p.id}</IdCell>
                          <PropCell>
                            <Line $kind="title">S1A_IW_OCN__2SDV_2017...</Line>
                            <Line $kind="name">{`S1A_IW_OCN__2SDV_${p.stamp}...`}</Line>
                            <Line>{`SENTINEL-1A    OCN    ${p.pass}`}</Line>
                            <Line>{`${p.date}    99999 x 99999 m`}</Line>
                            <Line>{`SENTINEL-1    (${p.size})`}</Line>
                          </PropCell>
                          <LookCell><QuickLook id={p.id} /></LookCell>
                        </tr>
                      ))}
                    </tbody>
                  </Table>
                </TableClip>
                <ScrollBar>
                  <ScrollTop />
                  <ScrollButton aria-label="Scroll up"><Tri up /></ScrollButton>
                  <Thumb />
                  <Track />
                  <ScrollButton aria-label="Scroll down"><Tri /></ScrollButton>
                </ScrollBar>
              </Results>
              <Splitter><Tri w={6} up color="#000" /><Tri w={6} color="#000" /></Splitter>
              <MapFrame><WorldMap /></MapFrame>
            </Centre>
            <SideBar>
              {sideTools.map(([kind, gap]) => (
                <SideButton key={kind} $gap={gap} aria-label={kind}><SideIcon kind={kind} /></SideButton>
              ))}
            </SideBar>
          </Work>
          <Splitter><Tri w={6} up color="#000" /><Tri w={6} color="#000" /></Splitter>
          <Timeline>
            <Modes>
              <RadioLabel><Radio type="radio" name="scale" defaultChecked />Timeline</RadioLabel>
              <RadioLabel><Radio type="radio" name="scale" />Months</RadioLabel>
            </Modes>
            <Chart>
              <svg viewBox="0 0 596 38" preserveAspectRatio="none" shapeRendering="crispEdges" role="img" aria-label="Products over time">
                <defs>
                  <linearGradient id="bar" gradientUnits="userSpaceOnUse" x1="0" y1="2" x2="0" y2="32">
                    <stop offset="0" stopColor="#3a9ae0" />
                    <stop offset=".6" stopColor="#174f7c" />
                    <stop offset="1" stopColor="#16344c" />
                  </linearGradient>
                </defs>
                {[0, 148, 297, 446].map((x) => <rect key={x} x={x} y="22" width="1" height="16" />)}
                {bars.map(([x, h, w]) => <rect key={x} x={x} y={32 - h} width={w} height={h} fill="url(#bar)" />)}
              </svg>
              <Years><span>2014</span><span>2015</span><span>2016</span><span>2017</span></Years>
            </Chart>
          </Timeline>
          <Status>27 Products</Status>
        </Body>
      </Frame>
      <Neighbours><Neighbour /><Neighbour $flat /><Neighbour $flat /></Neighbours>
    </Screen>
  );
}
